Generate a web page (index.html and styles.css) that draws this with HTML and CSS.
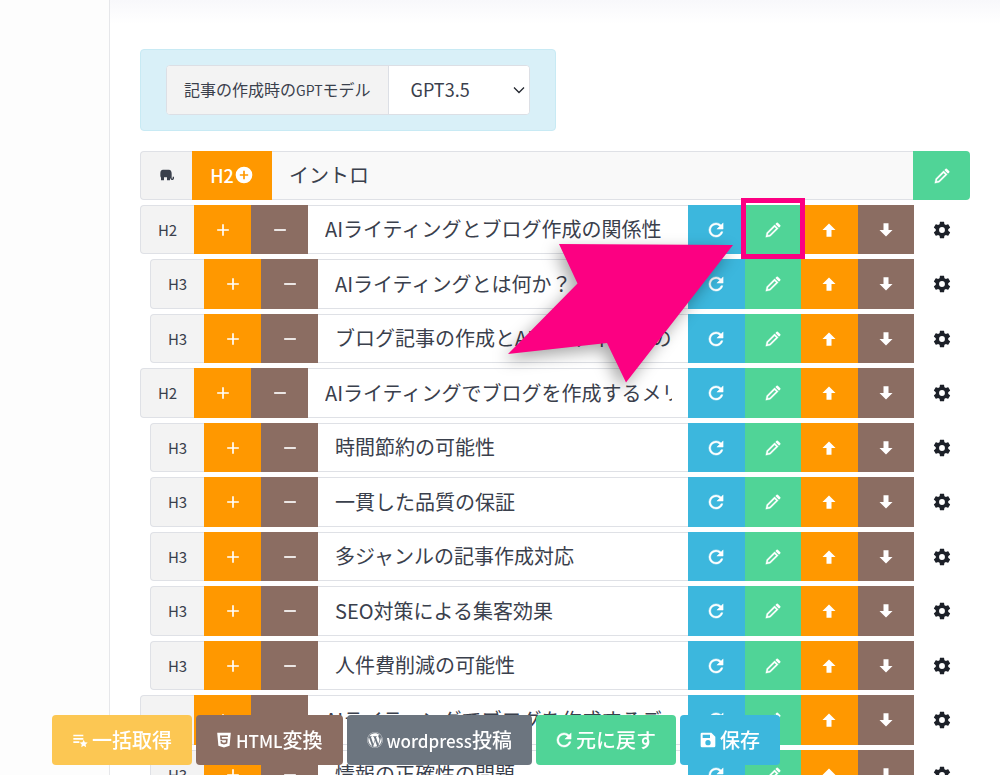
FILE: index.html
```
<!DOCTYPE html>
<html lang="ja">
<head>
<meta charset="utf-8">
<title>記事の作成</title>
<link rel="stylesheet" href="styles.css">
</head>
<body>
<svg class="sprite" aria-hidden="true">
  <symbol id="plus" viewBox="0 0 24 24"><path d="M19 13H13V19H11V13H5V11H11V5H13V11H19Z"/></symbol>
  <symbol id="minus" viewBox="0 0 24 24"><path d="M19 13H5V11H19Z"/></symbol>
  <symbol id="plus-circle" viewBox="0 0 24 24"><path d="M17 13H13V17H11V13H7V11H11V7H13V11H17M12 2A10 10 0 0 0 2 12A10 10 0 0 0 12 22A10 10 0 0 0 22 12A10 10 0 0 0 12 2Z"/></symbol>
  <symbol id="refresh" viewBox="3 3 18 18"><path stroke="currentColor" stroke-width=".5" d="M17.65 6.35C16.2 4.9 14.21 4 12 4A8 8 0 0 0 4 12A8 8 0 0 0 12 20C15.73 20 18.84 17.45 19.73 14H17.65C16.83 16.33 14.61 18 12 18A6 6 0 0 1 6 12A6 6 0 0 1 12 6C13.66 6 15.14 6.69 16.22 7.78L13 11H20V4Z"/></symbol>
  <symbol id="pencil" viewBox="2 1 21 21"><path fill-rule="evenodd" stroke="currentColor" stroke-width=".4" d="M14.600 4.600L19.400 9.400L9 19.800L3 21L4.200 15ZM14.600 7.400L6 16L5.600 18.400L8 18L16.600 9.400Z"/><path d="M15.600 3.600L17.300 1.900Q18 1.300 18.800 1.900L22.100 5.200Q22.700 6 22.100 6.700L20.400 8.400Z"/></symbol>
  <symbol id="up" viewBox="0 0 24 24"><path d="M15 20H9V12H4.160L12 4.160L19.840 12H15Z"/></symbol>
  <symbol id="down" viewBox="0 0 24 24"><path d="M9 4H15V12H19.840L12 19.840L4.160 12H9Z"/></symbol>
  <symbol id="cog" viewBox="0 0 24 24"><path d="M12 15.500A3.500 3.500 0 0 1 8.500 12A3.500 3.500 0 0 1 12 8.500A3.500 3.500 0 0 1 15.500 12A3.500 3.500 0 0 1 12 15.500M19.430 12.970C19.470 12.650 19.500 12.330 19.500 12C19.500 11.670 19.470 11.340 19.430 11L21.540 9.370C21.730 9.220 21.780 8.950 21.660 8.730L19.660 5.270C19.540 5.050 19.270 4.960 19.050 5.050L16.560 6.050C16.040 5.660 15.500 5.320 14.870 5.070L14.500 2.420C14.460 2.180 14.250 2 14 2H10C9.750 2 9.540 2.180 9.500 2.420L9.130 5.070C8.500 5.320 7.960 5.660 7.440 6.050L4.950 5.050C4.730 4.960 4.460 5.050 4.340 5.270L2.340 8.730C2.210 8.950 2.270 9.220 2.460 9.370L4.570 11C4.530 11.340 4.500 11.670 4.500 12C4.500 12.330 4.530 12.650 4.570 12.970L2.460 14.630C2.270 14.780 2.210 15.050 2.340 15.270L4.340 18.730C4.460 18.950 4.730 19.030 4.950 18.950L7.440 17.940C7.960 18.340 8.500 18.680 9.130 18.930L9.500 21.580C9.540 21.820 9.750 22 10 22H14C14.250 22 14.460 21.820 14.500 21.580L14.870 18.930C15.500 18.670 16.040 18.340 16.560 17.940L19.050 18.950C19.270 19.030 19.540 18.950 19.660 18.730L21.660 15.270C21.780 15.050 21.730 14.780 21.540 14.630Z"/></symbol>
  <symbol id="elephant" viewBox="0 0 24 24"><path d="M6 4H14.500C18 4 19 7 19 10V16.500C19 17.800 20.500 17.800 20.500 16.500V14.500H22.500V17C22.500 20.500 17.500 20.500 17 17H16.500V20H12V15.500H7.500V20H3V14L2 16V9.500Q2 4 6 4Z"/></symbol>
  <symbol id="list-star" viewBox="0 0 24 24"><path d="M2 4H17V6.500H2ZM2 9H17V11.500H2ZM2 14H11V16.500H2ZM17.500 11.500L19.300 15.300L23.500 15.800L20.400 18.600L21.200 22.800L17.500 20.700L13.800 22.800L14.600 18.600L11.500 15.800L15.700 15.300Z"/></symbol>
  <symbol id="html5" viewBox="2 2 20 20"><path d="M12 17.560L16.070 16.430L16.620 10.330H9.380L9.200 8.300H16.800L17 6.310H7L7.560 12.320H14.450L14.220 14.900L12 15.500L9.780 14.900L9.640 13.240H7.640L7.930 16.430L12 17.560M3.500 3H20.500L19 19.200L12 21.300L5 19.200Z"/></symbol>
  <symbol id="save" viewBox="0 0 24 24"><path fill-rule="evenodd" d="M3 1H17L23 7V21Q23 23 21 23H3Q1 23 1 21V3Q1 1 3 1ZM4 4V9H15V4ZM12 12A4 4 0 0 0 12 20A4 4 0 0 0 12 12Z"/></symbol>
  <symbol id="wordpress" viewBox="0 0 512 512"><path d="M61.7 169.4l101.5 278C92.2 413 43.3 340.2 43.3 256c0-30.9 6.6-60.1 18.4-86.6zm337.9 75.9c0-26.3-9.4-44.5-17.5-58.7-10.8-17.5-20.9-32.4-20.9-49.9 0-19.6 14.8-37.8 35.7-37.8.9 0 1.8.1 2.8.2-37.9-34.7-88.3-55.900-143.700-55.900-74.300 0-139.700 38.100-177.800 95.900 5 .2 9.700.3 13.700.3 22.200 0 56.700-2.700 56.700-2.700 11.500-.7 12.800 16.200 1.400 17.500 0 0-11.500 1.300-24.300 2l77.500 230.400L249.800 247l-33.100-90.800c-11.500-.7-22.300-2-22.300-2-11.500-.7-10.100-18.200 1.300-17.500 0 0 35.100 2.700 56 2.700 22.200 0 56.700-2.700 56.700-2.700 11.500-.7 12.800 16.200 1.400 17.500 0 0-11.500 1.300-24.300 2l76.900 228.700 21.200-70.900c9-29.400 16-50.500 16-68.700zm-139.900 29.300l-63.800 185.500c19.100 5.600 39.200 8.700 60.100 8.700 24.800 0 48.500-4.300 70.600-12.100-.6-.9-1.100-1.900-1.500-2.900l-65.400-179.200zm183-120.700c.9 6.800 1.400 14 1.400 21.900 0 21.600-4 45.800-16.200 76.200l-65 187.900C426.200 403 468.700 334.500 468.700 256c0-37-9.400-71.800-26-102.100zM504 256c0 136.800-111.300 248-248 248C119.200 504 8 392.700 8 256 8 119.200 119.200 8 256 8c136.700 0 248 111.200 248 248zm-11.400 0c0-130.500-106.200-236.600-236.600-236.600C125.500 19.400 19.400 125.500 19.400 256S125.600 492.600 256 492.600c130.500 0 236.600-106.100 236.600-236.600z"/></symbol>
</svg>

<div class="layout">
  <aside class="sidebar"></aside>
  <main class="content">
    <div class="model-panel">
      <div class="model-group">
        <label class="model-label" for="model">記事の作成時の<span class="model-latin">GPT</span>モデル</label>
        <div class="model-field">
          <select class="model-select" id="model"><option>GPT3.5</option></select>
          <svg class="chevron" viewBox="0 0 12 8" aria-hidden="true"><path d="M1 1.500L6 6.500L11 1.500"/></svg>
        </div>
      </div>
    </div>

    <div class="row row-intro">
      <span class="tag tag-intro"><svg class="icon"><use href="#elephant"/></svg></span>
      <button class="btn btn-h2 orange" type="button">H2<svg class="icon icon-lg"><use href="#plus-circle"/></svg></button>
      <input class="title title-intro" type="text" value="イントロ" aria-label="イントロ" readonly>
      <button class="btn btn-edit green" type="button" aria-label="編集"><svg class="icon"><use href="#pencil"/></svg></button>
    </div>

    <div class="rows" id="rows"></div>

    <svg class="callout" viewBox="490 190 320 210" aria-hidden="true">
      <rect x="743.500" y="200.500" width="59" height="56"/>
      <polygon points="559,244 733,245 626,382.500 607,343 508,354 577.500,283.500"/>
    </svg>
  </main>
</div>

<div class="toolbar">
  <button class="action yellow" type="button"><svg class="icon"><use href="#list-star"/></svg>一括取得</button>
  <button class="action brown" type="button"><svg class="icon"><use href="#html5"/></svg><span><span class="latin">HTML</span>変換</span></button>
  <button class="action gray" type="button"><svg class="icon"><use href="#wordpress"/></svg><span><span class="latin">wordpress</span>投稿</span></button>
  <button class="action green" type="button"><svg class="icon"><use href="#refresh"/></svg>元に戻す</button>
  <button class="action blue" type="button"><svg class="icon"><use href="#save"/></svg>保存</button>
</div>
<script src="rows.js"></script>
</body>
</html>
```
FILE: styles.css
```
* { box-sizing: border-box; }

body {
  margin: 0;
  height: 100vh;
  overflow: hidden;
  background: #fff;
  color: #3a404c;
  font-family: "Noto Sans CJK JP", "Noto Sans", sans-serif;
}

button, input, select { font: inherit; color: inherit; margin: 0; }

.sprite { position: absolute; width: 0; height: 0; }

.icon { width: 16px; height: 16px; flex: none; fill: currentColor; }
.icon-lg { width: 20px; height: 20px; }

.layout { display: flex; min-height: 100vh; }

.sidebar {
  flex: 0 0 110px;
  background: #fdfdfd;
  border-right: 1px solid #e6e7ea;
}

.content {
  position: relative;
  flex: 1;
  min-width: 0;
  padding: 49px 30px 0;
  background: linear-gradient(#f8f8fb, #fff 24px);
}

.model-panel {
  width: fit-content;
  padding: 15px 25px;
  background: #d9f0f8;
  border: 1px solid #c8eaf4;
  border-radius: 4px;
}

.model-group {
  display: flex;
  height: 50px;
  border: 1px solid #dcdfe5;
  border-radius: 4px;
  background: #fff;
  overflow: hidden;
}

.model-label {
  display: block;
  padding: 0 17px;
  background: #f3f3f3;
  border-right: 1px solid #dcdfe5;
  font-size: 16px;
  line-height: 46px;
}
.model-latin { font-size: 14px; }

.model-field { position: relative; display: flex; }

.model-select {
  appearance: none;
  width: 140px;
  padding: 0 22px 2px;
  border: 0;
  background: #fff;
  font-size: 18px;
}

.chevron {
  position: absolute;
  right: 4px;
  top: 20px;
  width: 12px;
  height: 8px;
  fill: none;
  stroke: #23272f;
  stroke-width: 1.3;
  pointer-events: none;
}

.row { display: flex; }
.row-intro { height: 49px; margin-top: 20px; }
.row-h3 { padding-left: 10px; }

.rows {
  display: grid;
  grid-auto-rows: 49px 50px;
  gap: 5px;
  margin-top: 5px;
}

.tag {
  display: flex;
  align-items: center;
  justify-content: center;
  flex: 0 0 54px;
  padding-bottom: 1px;
  border: 1px solid #dfe1e6;
  border-right: 0;
  border-radius: 4px 0 0 4px;
  background: #f3f3f3;
  font-size: 15px;
}
.tag-intro { flex-basis: 52px; }

.btn {
  display: flex;
  align-items: center;
  justify-content: center;
  padding: 0;
  border: 0;
  color: #fff;
  font-size: 18px;
}
.btn-step { flex: 0 0 57px; }
.btn-h2 { flex: 0 0 80px; padding-bottom: 2px; font-weight: 500; }
.btn-edit { flex: 0 0 57px; border-radius: 0 4px 4px 0; }

.title {
  flex: 1;
  min-width: 0;
  padding: 0 16px 2px 17px;
  border: 1px solid #dfe1e6;
  border-width: 1px 0;
  background: #fff;
  font-size: 20px;
}
.title-intro { background: #f9f9f9; }

.actions {
  display: grid;
  grid-template-columns: repeat(4, 1fr);
  flex: 0 0 226px;
}

.settings {
  display: flex;
  align-items: center;
  justify-content: center;
  flex: 0 0 56px;
  padding: 0;
  border: 0;
  background: none;
  color: #1c2028;
}

.orange { background: #ff9800; }
.brown { background: #8b6d62; }
.green { background: #50d497; }
.blue { background: #3cb7dd; }
.yellow { background: #fcc753; }
.gray { background: #6c757f; }

.callout {
  position: absolute;
  top: 190px;
  right: 190px;
  width: 320px;
  height: 210px;
  overflow: visible;
  pointer-events: none;
}
.callout rect { fill: none; stroke: #fc0082; stroke-width: 5; }
.callout polygon { fill: #fc0082; filter: drop-shadow(-4px 6px 8px rgba(0, 0, 0, .35)); }

.toolbar {
  position: fixed;
  left: 0;
  right: 0;
  bottom: 0;
  display: flex;
  gap: 4px;
  padding: 0 52px 10px;
}

.action {
  display: flex;
  align-items: center;
  gap: 4px;
  height: 50px;
  padding: 0 20px;
  border: 0;
  border-radius: 4px;
  color: #fff;
  font-size: 20px;
  font-weight: 500;
  line-height: 30px;
  white-space: nowrap;
}
.latin { font-size: 17px; }
```
FILE: rows.js
```
const headings = [
  ["H2", "AIライティングとブログ作成の関係性"],
  ["H3", "AIライティングとは何か？"],
  ["H3", "ブログ記事の作成とAIライティングの技術"],
  ["H2", "AIライティングでブログを作成するメリット"],
  ["H3", "時間節約の可能性"],
  ["H3", "一貫した品質の保証"],
  ["H3", "多ジャンルの記事作成対応"],
  ["H3", "SEO対策による集客効果"],
  ["H3", "人件費削減の可能性"],
  ["H2", "AIライティングでブログを作成するデメリット"],
  ["H3", "情報の正確性の問題"]
];

const button = (cls, icon, label, size = "") =>
  `<button class="${cls}" type="button" aria-label="${label}"><svg class="icon ${size}"><use href="#${icon}"/></svg></button>`;

document.getElementById("rows").innerHTML = headings.map(([level, text]) => `
  <div class="row row-${level.toLowerCase()}">
    <span class="tag">${level}</span>
    ${button("btn btn-step orange", "plus", "追加", "icon-lg")}
    ${button("btn btn-step brown", "minus", "削除", "icon-lg")}
    <input class="title" type="text" value="${text}" aria-label="${level}">
    <div class="actions">
      ${button("btn blue", "refresh", "再生成")}
      ${button("btn green", "pencil", "編集")}
      ${button("btn orange", "up", "上へ", "icon-lg")}
      ${button("btn brown", "down", "下へ", "icon-lg")}
    </div>
    ${button("settings", "cog", "設定", "icon-lg")}
  </div>`).join("");
```
